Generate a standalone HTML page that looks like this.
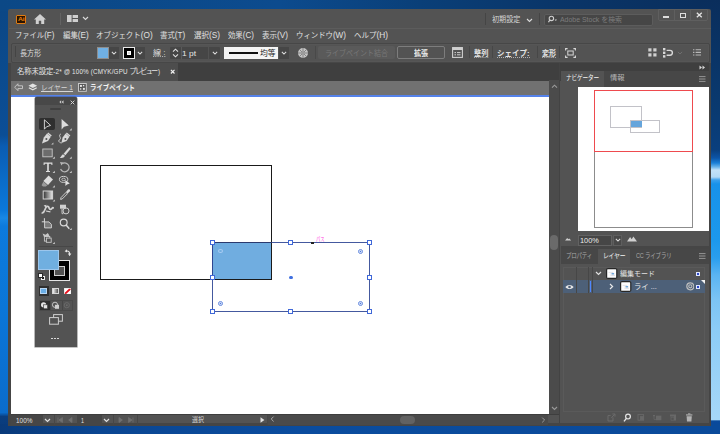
<!DOCTYPE html>
<html lang="ja">
<head>
<meta charset="utf-8">
<title>Adobe Illustrator</title>
<style>
*{box-sizing:border-box;margin:0;padding:0}
html,body{width:720px;height:434px;overflow:hidden}
body{position:relative;font-family:"Liberation Sans","Noto Sans CJK JP",sans-serif;font-size:7.5px;color:#dcdcdc;
 background:#0a4a8c}
.abs,.abs *{position:absolute}
.t{white-space:nowrap;line-height:10px;height:10px}
#desk{left:0;top:0;width:720px;height:434px;
 background:linear-gradient(180deg,#0b4684 0px,#0b4a8c 60px,#0b4e96 135px,#0a5cb2 146px,#0a6cc8 180px,#0a78da 210px,#1888e4 218px,#0c7adc 226px,#0a76d8 310px,#0a6ccc 412.5px,#0a56a8 414.5px,#0a3e80 416.5px,#093a7a 434px)}
#deskr{left:700px;top:0;width:20px;height:434px;
 background:linear-gradient(180deg,#0a2e5c 0px,#0a3a70 110px,#0a3f7e 150px,#0c55a8 158px,#1a80d8 163px,#6ab4ec 167px,#c4e2f8 170px,#b4daf6 177px,#3aa0ee 180px,#1792ea 184px,#1c98ec 240px,#2a9eee 258px,#5ab4f2 275px,#7cc4f4 300px,#8cccf6 330px,#a6d8f8 419.5px,#0a4a9c 421px,#0a4696 434px)}
#deskt{left:0;top:0;width:720px;height:11px;background:linear-gradient(90deg,#0b4886 0,#0c4b8e 280px,#0a3f78 420px,#0a3568 560px,#0a2e5c 720px)}
#deskb{left:0;top:424px;width:720px;height:10px;background:linear-gradient(90deg,#093a7a 0,#0a4692 100px,#0a4c9e 300px,#0a4a9a 720px)}
#win{left:8.3px;top:9.2px;width:703.1px;height:416.8px;background:#535353;border-radius:2px 2px 0 0;overflow:hidden}
.mi{top:1px;color:#e0e0e0;font-size:7.6px}
.ul{color:#e4e4e4;font-weight:bold;border-bottom:1px dotted #b0b0b0;height:9.4px;line-height:9px}
.hd{width:5px;height:5px;background:#fff;border:1px solid #4068d8}
.cw{width:5px;height:5px;border-radius:50%;border:1px solid #6288de;background:radial-gradient(circle,#4a78de 0,#4a78de 36%,#fff 52%)}
.abs .t span{position:static}
.l{font-size:8.4px}
</style>
</head>
<body>
<div id="desk" class="abs"></div>
<div id="deskt" class="abs"></div>
<div id="deskr" class="abs"></div>
<div id="deskb" class="abs"></div>
<div id="win" class="abs"></div>
<div id="ui" class="abs" style="left:0;top:0;width:720px;height:434px">
<!--TITLEBAR-->
<div id="titlebar" style="left:9px;top:10px;width:702px;height:18px">
 <div style="left:7.3px;top:5px;width:10.2px;height:9.2px;background:#2b1300;border:1px solid #e07c12;border-radius:1px"></div>
 <div id="tx1" class="t" style="left:9.30px;top:4.30px;font-size:5.5px;font-weight:bold;color:#e8830f;letter-spacing:-0.2px;transform:scaleX(1.253);transform-origin:0 0">Ai</div>
 <svg style="left:24px;top:3px" width="14" height="12" viewBox="0 0 14 12"><path d="M7 1 L1 6.4 H2.8 V11 H5.8 V7.8 H8.2 V11 H11.2 V6.4 H13 Z" fill="#d0d0d0"/></svg>
 <div style="left:51px;top:3px;width:1px;height:12px;background:#636363"></div>
 <svg style="left:58px;top:5px" width="12" height="8" viewBox="0 0 12 8"><rect x="0" y="0" width="4.6" height="7" fill="#cfcfcf"/><rect x="5.6" y="0" width="5.4" height="3" fill="#cfcfcf"/><rect x="5.6" y="4" width="5.4" height="3" fill="#cfcfcf"/></svg>
 <svg style="left:73px;top:6px" width="7" height="5" viewBox="0 0 7 5"><path d="M1 1 L3.5 3.5 L6 1" stroke="#dadada" stroke-width="1.1" fill="none"/></svg>
 <div style="left:476px;top:3px;width:1px;height:12px;background:#454545"></div>
 <div id="tx2" class="t" style="left:482.71px;top:4.61px;color:#d6d6d6;transform:scaleX(0.943);transform-origin:0 0">初期設定</div>
 <svg style="left:516.5px;top:8px" width="7" height="5" viewBox="0 0 7 5"><path d="M1 1 L3.5 3.5 L6 1" stroke="#dadada" stroke-width="1.1" fill="none"/></svg>
 <div style="left:530px;top:3px;width:1px;height:12px;background:#454545"></div>
 <div style="left:535px;top:3.5px;width:108.6px;height:12px;background:#464646;border:0.8px solid #5c5c5c;border-radius:2px"></div>
 <svg style="left:538.5px;top:5px" width="10" height="9" viewBox="0 0 10 9"><circle cx="3.4" cy="3.4" r="2.2" stroke="#d0d0d0" stroke-width="1.1" fill="none"/><path d="M1.9 5 L0.5 7.2" stroke="#d0d0d0" stroke-width="1.2"/><path d="M6.6 4.6 L7.8 6 L9 4.6Z" fill="#d0d0d0"/></svg>
 <div id="tx3" class="t" style="left:551.00px;top:4.61px;color:#7c7c7c;font-size:7.3px;transform:scaleX(0.950);transform-origin:0 0">Adobe Stock を検索</div>
 <div style="left:648.8px;top:-1px;width:50px;height:11.6px;border:1px solid #5f5f5f;border-radius:0 0 2px 2px"></div>
 <div style="left:664.5px;top:0;width:1px;height:11px;background:#5f5f5f"></div>
 <div style="left:681px;top:0;width:1px;height:11px;background:#5f5f5f"></div>
 <div style="left:653.8px;top:5.9px;width:6.3px;height:1.9px;background:#dcdcdc"></div>
 <div style="left:670.7px;top:2.6px;width:6.4px;height:5.5px;border:1.6px solid #dcdcdc"></div>
 <svg style="left:687.2px;top:2.2px" width="6.6" height="5.8" viewBox="0 0 8 7" preserveAspectRatio="none"><path d="M1 0.8 L7 6.2 M7 0.8 L1 6.2" stroke="#e4e4e4" stroke-width="1.6"/></svg>
</div>
<!--MENUBAR-->
<div id="menubar" style="left:9px;top:28px;width:702px;height:14px;border-top:1px solid #5c5c5c">
 <div id="tx4" class="t mi" style="left:6.30px;transform:scaleX(0.959);transform-origin:0 0">ファイル<span class="l">(F)</span></div>
 <div id="tx5" class="t mi" style="left:53.50px;transform:scaleX(0.979);transform-origin:0 0">編集<span class="l">(E)</span></div>
 <div id="tx6" class="t mi" style="left:86.80px;transform:scaleX(0.983);transform-origin:0 0">オブジェクト<span class="l">(O)</span></div>
 <div id="tx7" class="t mi" style="left:151.30px;transform:scaleX(0.977);transform-origin:0 0">書式<span class="l">(T)</span></div>
 <div id="tx8" class="t mi" style="left:185.00px;transform:scaleX(0.986);transform-origin:0 0">選択<span class="l">(S)</span></div>
 <div id="tx9" class="t mi" style="left:219.00px;transform:scaleX(0.969);transform-origin:0 0">効果<span class="l">(C)</span></div>
 <div id="tx10" class="t mi" style="left:253.00px;transform:scaleX(0.986);transform-origin:0 0">表示<span class="l">(V)</span></div>
 <div id="tx11" class="t mi" style="left:287.00px;transform:scaleX(0.972);transform-origin:0 0">ウィンドウ<span class="l">(W)</span></div>
 <div id="tx12" class="t mi" style="left:345.00px;transform:scaleX(0.988);transform-origin:0 0">ヘルプ<span class="l">(H)</span></div>
</div>
<!--CONTROLBAR-->
<div id="ctrl" style="left:11px;top:42.6px;width:699.3px;height:20px;background:#535353;border:1px solid #474747;border-radius:2px;box-shadow:inset 0 0 0 0.5px #5a5a5a">
 <div style="left:3.00px;top:2.60px;width:1px;height:11px;background:#444"></div>
 <div id="tx13" class="t" style="left:7.71px;top:5.01px;color:#dcdcdc;transform:scaleX(0.938);transform-origin:0 0">長方形</div>
 <div style="left:85.1px;top:3.1px;width:12px;height:12px;background:#70b0e4;border:0.8px solid #8e8e8e"></div>
 <div style="left:96.70px;top:3.10px;width:10px;height:12px;background:#464646"></div>
 <svg style="left:98.80px;top:7.15px" width="6" height="4.3" viewBox="0 0 7 5"><path d="M1 1 L3.5 3.5 L6 1" stroke="#e0e0e0" stroke-width="1.2" fill="none"/></svg>
 <div style="left:110.50px;top:3.10px;width:12px;height:12px;background:#000;border:1px solid #e8e8e8"></div>
 <div style="left:114.50px;top:7.10px;width:4px;height:4px;background:#d8d8d8;border:1px solid #fff"></div>
 <div style="left:123.00px;top:3.10px;width:10px;height:12px;background:#464646"></div>
 <svg style="left:125.00px;top:7.15px" width="6" height="4.3" viewBox="0 0 7 5"><path d="M1 1 L3.5 3.5 L6 1" stroke="#e0e0e0" stroke-width="1.2" fill="none"/></svg>
 <div id="tx14" class="t" style="left:141.00px;top:4.61px;color:#dedede;border-bottom:1px dotted #b4b4b4;height:8.8px;line-height:9px;font-size:7.2px;transform:scaleX(1.126);transform-origin:0 0">線 :</div>
 <div style="left:158.4px;top:3.1px;width:49.7px;height:12px;background:#464646;border-radius:1px"></div>
 <div style="left:168.6px;top:3.1px;width:0.7px;height:12px;background:#5a5a5a"></div>
 <svg style="left:160.00px;top:4.10px" width="7" height="10" viewBox="0 0 7 10"><path d="M1 3.6 L3.5 1.2 L6 3.6 M1 6.4 L3.5 8.8 L6 6.4" stroke="#e0e0e0" stroke-width="1.1" fill="none"/></svg>
 <div id="tx16" class="t" style="left:170.00px;top:5.21px;color:#e8e8e8;font-size:8px;transform:scaleX(1.049);transform-origin:0 0">1 pt</div>
 <div style="left:196.00px;top:3.10px;width:1px;height:12px;background:#535353"></div>
 <svg style="left:199.50px;top:7.15px" width="6" height="4.3" viewBox="0 0 7 5"><path d="M1 1 L3.5 3.5 L6 1" stroke="#e0e0e0" stroke-width="1.2" fill="none"/></svg>
 <div style="left:212.4px;top:3.10px;width:53.4px;height:12px;background:#f4f4f4"></div>
 <div style="left:216.6px;top:8.40px;width:29.6px;height:1.6px;background:#111"></div>
 <div id="tx17" class="t" style="left:248.00px;top:5.01px;color:#1c1c1c;transform:scaleX(1.033);transform-origin:0 0">均等</div>
 <div style="left:267.00px;top:3.10px;width:10px;height:12px;background:#464646"></div>
 <svg style="left:269.00px;top:7.15px" width="6" height="4.3" viewBox="0 0 7 5"><path d="M1 1 L3.5 3.5 L6 1" stroke="#e0e0e0" stroke-width="1.2" fill="none"/></svg>
 <svg style="left:285.2px;top:3.60px" width="12" height="12" viewBox="0 0 12 12"><circle cx="6" cy="6" r="5" fill="#c4c4c4"/><path d="M6 1 V11 M1 6 H11 M2.5 2.5 L9.5 9.5 M9.5 2.5 L2.5 9.5" stroke="#6a6a6a" stroke-width="0.7"/><circle cx="6" cy="6" r="1.8" fill="#9a9a9a"/></svg>
 <div style="left:302.5px;top:2.6px;width:1px;height:12.5px;background:#494949"></div>
 <div style="left:306px;top:2.6px;width:76.5px;height:12.5px;background:#5a5a5a;border-radius:2px"></div>
 <div id="tx18" class="t" style="left:312.50px;top:5.01px;color:#787878;transform:scaleX(0.933);transform-origin:0 0">ライブペイント結合</div>
 <div style="left:384.80px;top:2.60px;width:48px;height:12.5px;border:1px solid #7d7d7d;border-radius:2px"></div>
 <div id="tx19" class="t" style="left:402.00px;top:5.01px;color:#ececec;font-weight:bold;transform:scaleX(0.933);transform-origin:0 0">拡張</div>
 <svg style="left:440.30px;top:3.60px" width="11" height="11" viewBox="0 0 11 11"><rect x="0.6" y="0.6" width="9.8" height="9.8" fill="none" stroke="#cfcfcf" stroke-width="1.1"/><rect x="0.6" y="0.6" width="9.8" height="2.4" fill="#cfcfcf"/><path d="M2.5 5.6 H4 M5 5.6 H8.5 M2.5 7.8 H4 M5 7.8 H8.5" stroke="#cfcfcf" stroke-width="1"/></svg>
 <div style="left:456.80px;top:2.60px;width:1px;height:12px;background:#474747"></div>
 <div id="tx20" class="t ul" style="left:461.71px;top:5.11px;transform:scaleX(0.953);transform-origin:0 0">整列</div>
 <div style="left:479.80px;top:2.60px;width:1px;height:12px;background:#474747"></div>
 <div id="tx21" class="t ul" style="left:485.00px;top:5.11px;transform:scaleX(1.000);transform-origin:0 0">シェイプ:</div>
 <div style="left:524.80px;top:2.60px;width:1px;height:12px;background:#474747"></div>
 <div id="tx22" class="t ul" style="left:530.00px;top:5.11px;transform:scaleX(0.933);transform-origin:0 0">変形</div>
 <div style="left:546.80px;top:2.60px;width:1px;height:12px;background:#474747"></div>
 <svg style="left:553.30px;top:4.10px" width="11" height="10" viewBox="0 0 11 10"><path d="M0.6 2.6 V0.6 H2.6 M8.4 0.6 H10.4 V2.6 M10.4 7.4 V9.4 H8.4 M2.6 9.4 H0.6 V7.4" stroke="#d8d8d8" stroke-width="1.1" fill="none"/><rect x="2.8" y="3" width="5.4" height="4" fill="none" stroke="#d8d8d8" stroke-width="1"/></svg>
 <svg style="left:636.00px;top:4.60px" width="9" height="9" viewBox="0 0 9 9"><g fill="#d0d0d0"><rect x="0.3" y="0.3" width="3.2" height="3.2"/><rect x="5.3" y="0.3" width="3.2" height="3.2"/><rect x="0.3" y="5.3" width="3.2" height="3.2"/><rect x="5.3" y="5.3" width="3.2" height="3.2"/></g></svg>
 <svg style="left:651.00px;top:4.10px" width="11" height="10" viewBox="0 0 11 10"><g fill="#d8d8d8"><rect x="0" y="0" width="2.4" height="2.4"/><rect x="0" y="3.6" width="2.4" height="2.4"/><rect x="0" y="7.2" width="2.4" height="2.4"/></g><path d="M3.6 2.4 H7 A2.4 2.4 0 0 1 7 7.2 H3.6" stroke="#d8d8d8" stroke-width="1.4" fill="none"/></svg>
 <svg style="left:665.00px;top:7.15px" width="6" height="4.3" viewBox="0 0 7 5"><path d="M1 1 L3.5 3.5 L6 1" stroke="#747474" stroke-width="1" fill="none"/></svg>
 <svg style="left:680.50px;top:5.60px" width="9" height="7" viewBox="0 0 9 7"><path d="M0 0.8 H1.4 M2.6 0.8 H8 M0 3.4 H1.4 M2.6 3.4 H8 M0 6 H1.4 M2.6 6 H8" stroke="#b8b8b8" stroke-width="1.1"/></svg>
</div>
<!--TABBAR-->
<div id="tabbar" style="left:9px;top:63px;width:702px;height:17.7px;background:#3f3f3f">
 <div style="left:2px;top:0.2px;width:167px;height:17.5px;background:#4d4d4d"></div>
 <div id="tx23" class="t" style="left:8.00px;top:3.61px;color:#e6e6e6;font-size:7.2px;letter-spacing:-0.1px;transform:scaleX(0.943);transform-origin:0 0"><span style="font-size:7.8px">名称未設定</span><span style="font-size:6.7px;letter-spacing:0.15px">-2* @ 100% (CMYK/GPU </span><span style="font-size:7.6px;letter-spacing:-1.9px">プレビュー</span><span style="font-size:6.5px"> )</span></div>
 <svg style="left:160.7px;top:6.3px" width="5.4" height="5.4" viewBox="0 0 6 6"><path d="M1 1 L5 5 M5 1 L1 5" stroke="#f0f0f0" stroke-width="1.3"/></svg>
 <svg style="left:690px;top:2px" width="7" height="5" viewBox="0 0 7 5"><path d="M0.5 0.5 L3 2.5 L0.5 4.5Z M3.5 0.5 L6 2.5 L3.5 4.5Z" fill="#d8d8d8"/></svg>
</div>
<div id="isobar" style="left:11px;top:80.6px;width:538px;height:14.3px;background:#717171">
 <svg style="left:3px;top:2.6px" width="9.4" height="8.4" viewBox="0 0 11 9" preserveAspectRatio="none"><path d="M0.8 4.5 L4.6 0.8 V3 H10 V6 H4.6 V8.2 Z" fill="none" stroke="#cdcdcd" stroke-width="1"/></svg>
 <svg style="left:17.3px;top:2.6px" width="9.6" height="8.6" viewBox="0 0 11 10" preserveAspectRatio="none"><path d="M5.5 0.5 L10.5 3.2 L5.5 5.9 L0.5 3.2Z" fill="#e2e2e2"/><path d="M1 5.6 L5.5 8 L10 5.6" stroke="#e2e2e2" stroke-width="1.4" fill="none"/></svg>
 <div id="tx24" class="t" style="left:30.21px;top:2.81px;color:#d6d6d6;text-decoration:underline;font-size:7.4px;transform:scaleX(0.901);transform-origin:0 0">レイヤー 1</div>
 <svg style="left:67px;top:2.4px" width="8.8" height="8.8" viewBox="0 0 9 9"><rect x="0.5" y="0.5" width="8" height="8" fill="#555" stroke="#c8c8c8" stroke-width="1"/><rect x="2" y="2" width="2" height="2" fill="#e6e6e6"/><rect x="5" y="5" width="2" height="2" fill="#e6e6e6"/><rect x="5" y="2" width="1.4" height="1.4" fill="#e6e6e6"/><rect x="2" y="5.4" width="1.4" height="1.4" fill="#e6e6e6"/></svg>
 <div id="tx25" class="t" style="left:78.50px;top:2.81px;color:#f2f2f2;font-weight:bold;font-size:7.4px;transform:scaleX(0.870);transform-origin:0 0">ライブペイント</div>
</div>
<div style="left:11px;top:94.8px;width:538px;height:2px;background:#5582ea"></div>
<!--CANVAS-->
<div id="canvas" style="left:11px;top:96.8px;width:538px;height:317px;background:#fff"></div>
<div style="left:8.3px;top:63px;width:2.7px;height:363px;background:#454545"></div>
<div style="left:8.3px;top:423.4px;width:703.1px;height:2.6px;background:#454545"></div>
<div style="left:709.3px;top:63px;width:2.1px;height:363px;background:#454545"></div>
<div id="art" style="left:0;top:0;width:720px;height:434px">
 <div style="left:212.6px;top:242.8px;width:58.4px;height:36.4px;background:#70ade0"></div>
 <div style="left:99.7px;top:165.1px;width:172.5px;height:115.3px;border:1.4px solid #1a1a1a"></div>
 <div style="left:212px;top:242.2px;width:157.9px;height:69.6px;border:1px solid #44599f"></div>
 <div style="left:212px;top:241.9px;width:59.5px;height:1.2px;background:#2b3a6e"></div>
 <div style="left:212px;top:242px;width:1.2px;height:38px;background:#2f4690"></div>
 <div class="hd" style="left:210px;top:240.2px"></div>
 <div class="hd" style="left:288.4px;top:240.2px"></div>
 <div class="hd" style="left:366.9px;top:240.2px"></div>
 <div class="hd" style="left:210px;top:274.6px"></div>
 <div class="hd" style="left:366.9px;top:274.6px"></div>
 <div class="hd" style="left:210px;top:308.8px"></div>
 <div class="hd" style="left:288.4px;top:308.8px"></div>
 <div class="hd" style="left:366.9px;top:308.8px"></div>
 <div class="cw" style="left:218.4px;top:249.2px;height:4px;border-color:#a9cdf2;background:#70ade0"></div>
 <div class="cw" style="left:358px;top:248.9px"></div>
 <div class="cw" style="left:218.3px;top:300.8px"></div>
 <div class="cw" style="left:358px;top:300.8px"></div>
 <div style="left:289.1px;top:275.5px;width:3.6px;height:3.6px;border-radius:50%;background:#3f6fe0"></div>
 <div style="left:311px;top:241.7px;width:3px;height:2px;background:#222"></div>
 <div id="tx26" class="t" style="left:316.40px;top:234.21px;color:#ff38e0;font-size:6px;transform:scaleX(0.716);transform-origin:0 0">パス</div>
</div>
<!--TOOLS-->
<div id="tools" style="left:34.5px;top:97.3px;width:42.3px;height:250.2px;background:#535353;border-radius:2px 2px 0 0;box-shadow:0 0 0 0.6px rgba(60,60,60,.6)">
 <div style="left:0;top:0;width:42.5px;height:8px;background:#484848;border-radius:2px 2px 0 0"></div>
 <svg style="left:24px;top:2.6px" width="5" height="4.2" viewBox="0 0 6 5"><path d="M2.6 0.4 L0.4 2.4 L2.6 4.4Z M5.4 0.4 L3.2 2.4 L5.4 4.4Z" fill="#cdcdcd"/></svg>
 <svg style="left:35.3px;top:2.3px" width="5" height="5" viewBox="0 0 6 6"><path d="M0.8 0.8 L5.2 5.2 M5.2 0.8 L0.8 5.2" stroke="#d4d4d4" stroke-width="1.2"/></svg>
 <div style="left:15px;top:10.3px;width:11.8px;height:2px;background:#414141;border-radius:1px"></div>
 <div style="left:4.4px;top:20.3px;width:16px;height:12.8px;background:#2f2f2f;border-radius:2px"></div>
 <svg id="toolsvg" style="left:0;top:14.9px" width="42.5" height="240" viewBox="0 0 42.5 240">
  <!-- row1 y center 12.5 (abs 124) -->
  <path d="M9.4 7.8 L9.4 17.2 L11.5 14.8 L15.6 13.4 Z" fill="none" stroke="#dedede" stroke-width="0.9" stroke-linejoin="miter"/>
  <path d="M26.6 7 L26.6 17.6 L29 14.8 L33.8 13.4 Z" fill="#dcdcdc"/>
  <path d="M34.5 18.5 h2.2 v-2.2z" fill="#cfcfcf"/>
  <!-- row2 pen y 27 -->
  <g fill="#d8d8d8" transform="translate(-1.2,0)"><path d="M13.2 21.6 L17 24.8 L14.2 29 L8.2 31.4 L10 25.4 Z"/><path d="M14.4 20.4 l3.6 3.2 l-0.9 1 l-3.6 -3.2z"/></g>
  <circle cx="11.4" cy="27" r="1" fill="#535353"/>
  <path d="M16.2 32.6 h2.2 v-2.2z" fill="#cfcfcf"/>
  <g fill="#d8d8d8"><path d="M30.6 21.6 L34.4 24.8 L31.6 29 L26.4 31 L27.6 25.4 Z"/><path d="M31.8 20.4 l3.6 3.2 l-0.9 1 l-3.6 -3.2z"/></g>
  <path d="M25.8 22 C22.4 23.4 27.6 26.4 24.2 28 C23 29 24.4 30.8 26.6 31" stroke="#d8d8d8" stroke-width="0.9" fill="none"/>
  <circle cx="30.4" cy="27" r="1" fill="#535353"/>
  <!-- row3 rect y 41 -->
  <rect x="7.8" y="37" width="9.4" height="7.8" fill="#6c6c6c" stroke="#c6c6c6" stroke-width="0.9"/>
  <path d="M17.6 46.8 h2.2 v-2.2z" fill="#cfcfcf"/>
  <path d="M34.2 35.2 L35.9 36.6 L30.4 43.2 L28.6 41.8 Z" fill="#d8d8d8"/><path d="M28 42.2 L30 43.8 C29 46.2 26.4 46.2 24.8 45.8 C26.2 44.8 26.4 43.2 28 42.2Z" fill="#d8d8d8"/>
  <path d="M34.5 46.8 h2.2 v-2.2z" fill="#cfcfcf"/>
  <!-- row4 T y 55 -->
  <path d="M8.6 50.6 H17.4 V53 H16.4 V51.8 H13.8 V59 H15 V60 H11 V59 H12.2 V51.8 H9.6 V53 H8.6Z" fill="#e0e0e0"/>
  <path d="M17.6 61 h2.2 v-2.2z" fill="#cfcfcf"/>
  <path d="M27.4 51.6 A4.4 4.4 0 1 1 25.6 57" stroke="#b8b8b8" stroke-width="1.2" fill="none"/><path d="M25 50 L28.6 50.6 L26.4 53.6Z" fill="#b8b8b8"/>
  <path d="M34.5 61 h2.2 v-2.2z" fill="#cfcfcf"/>
  <!-- row5 eraser y 69 -->
  <path d="M13.6 63.6 L18 67.6 L13 73 L8.4 69 Z" fill="#dcdcdc"/><path d="M8.4 69.6 L12.4 73.2 L10.8 74.6 H8 L6.6 73.2Z" fill="#9a9a9a"/>
  <path d="M17.6 75.4 h2.2 v-2.2z" fill="#cfcfcf"/>
  <ellipse cx="28.6" cy="67.4" rx="4.2" ry="3" fill="none" stroke="#cfcfcf" stroke-width="1"/><ellipse cx="28.6" cy="67.4" rx="1.8" ry="1.2" fill="none" stroke="#cfcfcf" stroke-width="0.8"/><path d="M30.4 68 L30.4 74 L32 72.4 L34.8 71.6Z" fill="#e0e0e0"/>
  <!-- row6 gradient y 83 -->
  <defs><linearGradient id="gr" x1="0" x2="1"><stop offset="0" stop-color="#303030"/><stop offset="1" stop-color="#e8e8e8"/></linearGradient></defs>
  <rect x="8.2" y="79" width="9.4" height="8" fill="url(#gr)" stroke="#d4d4d4" stroke-width="1"/>
  <path d="M17.6 89.6 h2.2 v-2.2z" fill="#cfcfcf"/>
  <path d="M33 77.6 C34.4 76.6 35.8 78 34.8 79.4 L32.6 81.6 L31 80 Z" fill="#d8d8d8"/><path d="M31 80.4 L32.4 81.8 L27.2 87 L25.6 87.4 L26 85.6 Z" fill="none" stroke="#d8d8d8" stroke-width="0.9"/>
  <!-- row7 warp y 97.5 -->
  <g transform="translate(0,-0.6)"><path d="M7.2 101.6 C10.6 100.6 9.4 96.2 12 95 C14.4 94 13.6 98.4 15.6 98 C17.4 97.6 17 95.8 18.2 96.4" stroke="#d2d2d2" stroke-width="1.7" fill="none" stroke-linecap="round"/><path d="M8.6 94 L11.4 93.4 L11 96.4Z" fill="#d2d2d2"/><path d="M11 99.6 L15.4 100.4" stroke="#d2d2d2" stroke-width="1.2"/></g>
  <g transform="translate(0,0.3)"><path d="M25 92.4 h6 v4 h-6z" fill="#d0d0d0"/><circle cx="31" cy="98.6" r="3" fill="none" stroke="#d0d0d0" stroke-width="1"/><path d="M27 96.4 v5 h1.4" stroke="#d0d0d0" stroke-width="0.9" fill="none"/></g>
  <!-- row8 artboard / zoom y 112 -->
  <g transform="translate(0,-0.4)"><path d="M9.4 106.6 V110.4 M6.8 110.2 H10" stroke="#d8d8d8" stroke-width="1" fill="none"/><path d="M9.6 110.3 H14 L16.4 112.8 V116.3 H9.6Z" fill="#7a7a7a" stroke="#d8d8d8" stroke-width="0.9"/></g>
  <g transform="translate(-0.3,0.9)"><circle cx="29" cy="109.6" r="3.4" fill="none" stroke="#d8d8d8" stroke-width="1.2"/><path d="M31.4 112.2 L34.6 115.8" stroke="#d8d8d8" stroke-width="1.5"/></g>
  <g transform="translate(0,-0.5)"><path d="M34.5 118.6 h2.2 v-2.2z" fill="#cfcfcf"/></g>
  <!-- row9 live paint y 126 -->
  <g transform="translate(0,0.9)"><path d="M7.6 120.6 l3 1.2 l2.2 -1.6 l1.6 2.4 l-2.4 1.8 l-3.2 -0.8z" fill="#c8c8c8"/><rect x="9.4" y="123.6" width="5.4" height="4.6" fill="none" stroke="#c8c8c8" stroke-width="0.9"/><rect x="11.4" y="125.2" width="4.8" height="4.2" fill="#535353" stroke="#c8c8c8" stroke-width="0.9"/></g>
  <g transform="translate(0,-0.3)"><path d="M17.6 132.4 h2.2 v-2.2z" fill="#cfcfcf"/></g>
 </svg>
 <div style="left:4px;top:148.5px;width:34.5px;height:1px;background:#474747"></div>
 <!-- fill/stroke -->
 <div style="left:14.5px;top:162.8px;width:20.8px;height:21.1px;background:#000;border:0.8px solid #e6e6e6"></div>
 <div style="left:19.8px;top:168.3px;width:10.3px;height:10.1px;background:#535353;border:0.8px solid #d0d0d0"></div>
 <div style="left:3.9px;top:152.4px;width:20.7px;height:20.5px;background:#70afe0;border:0.8px solid #9cc6ec"></div>
 <svg style="left:29.2px;top:152.2px" width="8" height="7.4" viewBox="0 0 9 9"><path d="M2.4 2.6 C5.2 2 6.6 3.6 6.4 6" stroke="#e6e6e6" stroke-width="1.4" fill="none"/><path d="M0.4 2.8 L3.2 0.4 L3.4 4.4Z M4.4 5.6 L8.6 5.4 L6.4 8.8Z" fill="#e6e6e6"/></svg>
 <div style="left:6.3px;top:178.6px;width:4.6px;height:4.6px;background:#1a1a1a;border:0.9px solid #f0f0f0"></div>
 <div style="left:3.9px;top:176.2px;width:4.6px;height:4.6px;background:#fff;border:0.9px solid #2a2a2a"></div>
 <!-- color mode row -->
 <div style="left:4.3px;top:188.4px;width:10px;height:10.4px;background:#2f2f2f"></div>
 <div style="left:5.9px;top:190.4px;width:6.8px;height:6.6px;background:#6aaee6;border:0.7px solid #b9d6f2"></div>
 <div style="left:17.3px;top:190.4px;width:6.9px;height:6.6px;background:linear-gradient(90deg,#f4f4f4,#555);border:0.7px solid #d8d8d8"></div>
 <svg style="left:29.2px;top:190.4px" width="7.4" height="6.6" viewBox="0 0 7.4 6.6"><rect x="0" y="0" width="7.4" height="6.6" fill="#fff"/><path d="M0.4 6.4 L7 0.2" stroke="#e8101c" stroke-width="1.9"/><rect x="0.35" y="0.35" width="6.7" height="5.9" fill="none" stroke="#e6e6e6" stroke-width="0.7"/></svg>
 <!-- draw mode row -->
 <div style="left:4.5px;top:203px;width:10.5px;height:10.5px;background:#2f2f2f"></div>
 <svg style="left:4.5px;top:203px" width="34" height="11" viewBox="0 0 34 11"><circle cx="4.6" cy="4.8" r="2.6" fill="#e4e4e4"/><rect x="4.6" y="4.8" width="4" height="4" fill="#e4e4e4" stroke="#2f2f2f" stroke-width="0.6"/>
 <circle cx="16" cy="4.8" r="2.6" fill="none" stroke="#cfcfcf" stroke-width="0.9"/><rect x="16" y="4.8" width="4" height="4" fill="#cfcfcf"/>
 <circle cx="27.8" cy="5.2" r="2.6" fill="none" stroke="#6c6c6c" stroke-width="0.9"/><circle cx="27.8" cy="5.2" r="1" fill="#6c6c6c"/></svg>
 <div style="left:15.6px;top:203px;width:1px;height:10.5px;background:#474747"></div>
 <div style="left:27px;top:203px;width:1px;height:10.5px;background:#474747"></div>
 <div style="left:4.5px;top:203px;width:34px;height:10.5px;border:0.6px solid #4a4a4a"></div>
 <svg style="left:14px;top:217px" width="14" height="12" viewBox="0 0 14 12"><rect x="4.6" y="0.6" width="8.8" height="6.6" fill="#535353" stroke="#cfcfcf" stroke-width="1"/><rect x="0.6" y="3.6" width="8.8" height="6.6" fill="#535353" stroke="#cfcfcf" stroke-width="1"/></svg>
 <div style="left:16.5px;top:240.5px;width:1.6px;height:1.6px;background:#d8d8d8"></div>
 <div style="left:19.7px;top:240.5px;width:1.6px;height:1.6px;background:#d8d8d8"></div>
 <div style="left:22.9px;top:240.5px;width:1.6px;height:1.6px;background:#d8d8d8"></div>
</div>
<!--STATUS-->
<div id="status" style="left:11px;top:413.8px;width:547.6px;height:9.6px;background:#535353;border-top:0.8px solid #3e3e3e">
 <div style="left:0;top:0;width:32px;height:10px;background:#464646"></div>
 <div id="tx27" class="t" style="left:4.90px;top:0.82px;color:#e2e2e2;font-size:7px;transform:scaleX(0.916);transform-origin:0 0">100%</div>
 <svg style="left:33px;top:3px" width="7" height="5" viewBox="0 0 7 5"><path d="M1 1 L3.5 3.5 L6 1" stroke="#e0e0e0" stroke-width="1.2" fill="none"/></svg>
 <div style="left:43px;top:0;width:1px;height:10px;background:#474747"></div>
 <svg style="left:46px;top:2px" width="18" height="6" viewBox="0 0 18 6"><path d="M1 0.5 V5.5 M5.4 0.5 L2 3 L5.4 5.5Z M15 0.5 L11.6 3 L15 5.5Z" fill="#707070" stroke="#707070" stroke-width="0.8"/></svg>
 <div style="left:66px;top:0;width:25px;height:10px;background:#464646"></div>
 <div id="tx28" class="t" style="left:70.00px;top:0.82px;color:#e2e2e2;font-size:7px;transform:scaleX(0.768);transform-origin:0 0">1</div>
 <svg style="left:92px;top:3px" width="7" height="5" viewBox="0 0 7 5"><path d="M1 1 L3.5 3.5 L6 1" stroke="#e0e0e0" stroke-width="1.2" fill="none"/></svg>
 <div style="left:102px;top:0;width:1px;height:10px;background:#474747"></div>
 <svg style="left:105px;top:2px" width="18" height="6" viewBox="0 0 18 6"><path d="M3 0.5 L6.4 3 L3 5.5Z M12.6 0.5 L16 3 L12.6 5.5Z M17 0.5 V5.5" fill="#707070" stroke="#707070" stroke-width="0.8"/></svg>
 <div style="left:126px;top:0;width:1px;height:10px;background:#474747"></div>
 <div id="tx29" class="t" style="left:180.71px;top:0.60px;color:#d8d8d8;font-size:6.6px;transform:scaleX(0.910);transform-origin:0 0">選択</div>
 <svg style="left:248.5px;top:2px" width="5" height="6" viewBox="0 0 5 6"><path d="M0.5 0.3 L4.4 3 L0.5 5.7Z" fill="#e0e0e0"/></svg>
 <div style="left:256px;top:0;width:1px;height:10px;background:#474747"></div>
 <div style="left:257px;top:0;width:280px;height:10px;background:#4a4a4a"></div>
 <svg style="left:259px;top:1.5px" width="5" height="6" viewBox="0 0 5 6"><path d="M3.6 0.6 L1.2 3 L3.6 5.4" stroke="#a8a8a8" stroke-width="1" fill="none"/></svg>
 <svg style="left:529.5px;top:2px" width="5" height="6" viewBox="0 0 5 6"><path d="M1.2 0.6 L3.6 3 L1.2 5.4" stroke="#9a9a9a" stroke-width="1" fill="none"/></svg>
 <div style="left:388.5px;top:1.5px;width:15px;height:7.5px;border-radius:4px;background:#626262"></div>
</div>
<div id="vscroll" style="left:549px;top:80.3px;width:9.6px;height:333.5px;background:#4b4b4b">
 <svg style="left:1.5px;top:3.4px" width="7" height="5" viewBox="0 0 7 5"><path d="M1 3.6 L3.5 1.2 L6 3.6" stroke="#9a9a9a" stroke-width="1.1" fill="none"/></svg>
 <svg style="left:1.5px;top:325.9px" width="7" height="5" viewBox="0 0 7 5"><path d="M1 1 L3.5 3.5 L6 1" stroke="#9a9a9a" stroke-width="1.1" fill="none"/></svg>
 <div style="left:0.8px;top:154.9px;width:8.4px;height:15px;border-radius:4.2px;background:#6a6a6a"></div>
</div>
<div style="left:558.6px;top:63px;width:1.9px;height:360.4px;background:#434343"></div>
<!--RIGHTPANEL-->
<div id="rp" style="left:560.5px;top:70.5px;width:148.8px;height:352.9px;background:#535353;overflow:hidden">
 <!-- navigator tabs -->
 <div style="left:0;top:0;width:150.5px;height:16.4px;background:#474747"></div>
 <div style="left:0;top:0;width:43.5px;height:16.4px;background:#535353"></div>
 <div id="tx30" class="t" style="left:5.50px;top:2.50px;color:#f4f4f4;font-size:7.2px;letter-spacing:-0.2px;transform:scaleX(0.787);transform-origin:0 0">ナビゲーター</div>
 <div id="tx31" class="t" style="left:49.50px;top:2.50px;color:#b4b4b4;font-size:7.2px;transform:scaleX(1.008);transform-origin:0 0">情報</div>
 <svg style="left:138.5px;top:5.4px" width="6.5" height="6" viewBox="0 0 8 6" preserveAspectRatio="none"><path d="M0 0.6 H8 M0 3 H8 M0 5.4 H8" stroke="#a6a6a6" stroke-width="0.9"/></svg>
 <!-- navigator preview -->
 <div style="left:17.3px;top:16.4px;width:132px;height:143.8px;background:#fff"></div>
 <div style="left:33.6px;top:80px;width:99px;height:77.3px;border:0.8px solid #8c8c8c;border-top:none"></div>
 <div style="left:49.65px;top:35.65px;width:31.9px;height:21.5px;border:0.8px solid #c2c2c8"></div>
 <div style="left:69.75px;top:49.65px;width:29.5px;height:13.2px;border:0.8px solid #c2c2c8"></div>
 <div style="left:70.3px;top:50.2px;width:11px;height:6.5px;background:#65a5dc"></div>
 <div style="left:33.15px;top:19.85px;width:99.3px;height:61.2px;border:1.5px solid #ee4a4e"></div>
 <!-- nav bottom -->
 <svg style="left:4.6px;top:166.8px" width="6.4" height="3.6" viewBox="0 0 7 4"><path d="M0 4 L2.4 1.2 L3.6 2.4 L4.6 1.6 L7 4Z" fill="#d0d0d0"/></svg>
 <div style="left:17.3px;top:164px;width:34.4px;height:11.2px;background:#464646;border:0.7px solid #626262"></div>
 <div style="left:52.1px;top:164px;width:9.6px;height:11.2px;background:#494949;border:0.7px solid #5e5e5e"></div>
 <div id="tx32" class="t" style="left:19.91px;top:165.50px;color:#ececec;font-size:7.6px;transform:scaleX(0.972);transform-origin:0 0">100%</div>
 <svg style="left:54px;top:167.8px" width="6" height="4.3" viewBox="0 0 7 5"><path d="M1 1 L3.5 3.5 L6 1" stroke="#e0e0e0" stroke-width="1.2" fill="none"/></svg>
 <svg style="left:66.8px;top:165.6px" width="10" height="5.6" viewBox="0 0 11 6"><path d="M0 6 L3.4 1 L5.2 3.4 L7 0.6 L11 6Z" fill="#d0d0d0"/></svg>
 <!-- panel 2 tabs -->
 <div style="left:0;top:175.8px;width:150.5px;height:3px;background:#464646"></div>
 <div style="left:0;top:178.8px;width:150.5px;height:15.2px;background:#474747"></div>
 <div style="left:37px;top:178.8px;width:32.5px;height:15.2px;background:#535353"></div>
 <div id="tx33" class="t" style="left:5.50px;top:180.50px;color:#a8a8a8;font-size:7px;letter-spacing:-0.3px;transform:scaleX(0.786);transform-origin:0 0">プロパティ</div>
 <div id="tx34" class="t" style="left:42.50px;top:180.50px;color:#f4f4f4;font-size:7.2px;letter-spacing:-0.3px;transform:scaleX(0.816);transform-origin:0 0">レイヤー</div>
 <div id="tx35" class="t" style="left:75.00px;top:180.50px;color:#a8a8a8;font-size:7px;letter-spacing:-0.2px;transform:scaleX(0.781);transform-origin:0 0">CC ライブラリ</div>
 <svg style="left:138.5px;top:182.3px" width="6.5" height="6" viewBox="0 0 8 6" preserveAspectRatio="none"><path d="M0 0.6 H8 M0 3 H8 M0 5.4 H8" stroke="#a6a6a6" stroke-width="0.9"/></svg>
 <!-- layers list -->
 <div style="left:2.5px;top:196px;width:142.4px;height:145px;border:0.6px solid #5a5a5a"></div>
 <div style="left:2.5px;top:209.7px;width:142.4px;height:12.4px;background:#4d6078"></div>
 <div style="left:15.5px;top:196.5px;width:0.8px;height:25.5px;background:#474747"></div>
 <div style="left:27.7px;top:196.5px;width:0.8px;height:25.5px;background:#474747"></div>
 <div style="left:31.9px;top:196.5px;width:0.8px;height:25.5px;background:#474747"></div>
 <svg style="left:34px;top:200.5px" width="7" height="5" viewBox="0 0 7 5"><path d="M1 1 L3.5 3.5 L6 1" stroke="#e0e0e0" stroke-width="1.2" fill="none"/></svg>
 <svg style="left:45.7px;top:197.8px" width="11.4" height="11" viewBox="0 0 11.4 11"><rect x="0.6" y="0.6" width="10.2" height="9.8" rx="1.2" fill="#fdfdfd" stroke="#262626" stroke-width="1.2"/><path d="M2.6 4.4 H7 V7.6 M4.4 6 H9 M4.4 7.6 H9" fill="none" stroke="#c9c9d0" stroke-width="0.5"/><rect x="5.6" y="5" width="2.4" height="1.4" fill="#6fa8dc"/></svg>
 <div id="tx36" class="t" style="left:59.91px;top:198.50px;color:#e2e2e2;font-size:7.2px;transform:scaleX(0.971);transform-origin:0 0">編集モード</div>
 <div style="left:135.5px;top:201px;width:4px;height:4px;background:#2c48c8;border:0.8px solid #dfe6ff"></div>
 <svg style="left:4.5px;top:213px" width="9" height="6" viewBox="0 0 9 6"><path d="M0.4 3 C2.4 0.2 6.6 0.2 8.6 3 C6.6 5.8 2.4 5.8 0.4 3Z" fill="#e8e8e8"/><circle cx="4.5" cy="3" r="1.3" fill="#4d5f78"/></svg>
 <div style="left:29px;top:210.5px;width:1.6px;height:11px;background:#4f86ff"></div>
 <svg style="left:48.5px;top:212.5px" width="5" height="7" viewBox="0 0 5 7"><path d="M1 1 L3.6 3.5 L1 6" stroke="#e8e8e8" stroke-width="1.2" fill="none"/></svg>
 <svg style="left:59.7px;top:210.6px" width="11.4" height="11" viewBox="0 0 11.4 11"><rect x="0.6" y="0.6" width="10.2" height="9.8" rx="1.2" fill="#fdfdfd" stroke="#262626" stroke-width="1.2"/><path d="M2.6 4.4 H7 V7.6 M4.4 6 H9 M4.4 7.6 H9" fill="none" stroke="#c9c9d0" stroke-width="0.5"/><rect x="5.6" y="5" width="2.4" height="1.4" fill="#6fa8dc"/></svg>
 <div id="tx37" class="t" style="left:73.71px;top:211.30px;color:#ececec;font-size:7.2px;transform:scaleX(1.019);transform-origin:0 0">ライ ...</div>
 <svg style="left:125px;top:211.6px" width="8.6" height="8.6" viewBox="0 0 8.6 8.6"><circle cx="4.3" cy="4.3" r="3.5" fill="none" stroke="#bdbdbd" stroke-width="1.2"/><circle cx="4.3" cy="4.3" r="1.6" fill="none" stroke="#bdbdbd" stroke-width="1.1"/></svg>
 <div style="left:135.5px;top:214px;width:4px;height:4px;background:#2c48c8;border:0.8px solid #dfe6ff"></div>
 <svg style="left:140.6px;top:209.7px" width="4.3" height="4.3" viewBox="0 0 4.5 4.5"><path d="M0 0 H4.5 V4.5Z" fill="#f4f4f4"/></svg>
 <!-- bottom icons -->
 <svg style="left:43px;top:341.3px" width="92" height="11" viewBox="0 0 92 11">
  <g fill="none" stroke="#6e6e6e" stroke-width="0.9" transform="translate(1,0)"><path d="M8 5.4 V9 H3 V3.6 H5.6 M6.4 5.8 L9.6 2.4 M7.4 2 H10 V4.6"/></g>
  <circle cx="24" cy="4.6" r="2.4" fill="none" stroke="#e4e4e4" stroke-width="1.2"/><path d="M22.4 6.4 L20 9.4" stroke="#e4e4e4" stroke-width="1.4"/>
  <g fill="none" stroke="#686868" stroke-width="0.9"><rect x="34" y="2.6" width="5.6" height="5.6"/><rect x="36.4" y="4.6" width="3" height="3" fill="#686868"/></g>
  <g fill="#686868"><rect x="49" y="3" width="2" height="1.4"/><rect x="52" y="3.6" width="5.4" height="4.6"/><path d="M50 4.4 v3 h2" stroke="#686868" fill="none" stroke-width="0.7"/></g>
  <g fill="#686868"><path d="M66 2.6 h6 v6 h-2 v-4 h-4z"/><rect x="67" y="5.2" width="3" height="3" fill="none" stroke="#686868" stroke-width="0.6"/></g>
  <g fill="#b4b4b4"><rect x="82" y="2.4" width="6.4" height="1.1"/><rect x="84" y="1.4" width="2.4" height="1"/><path d="M82.6 4.2 H87.8 L87.4 9.4 H83Z"/></g>
 </svg>
</div>
</div>
</body>
</html>
